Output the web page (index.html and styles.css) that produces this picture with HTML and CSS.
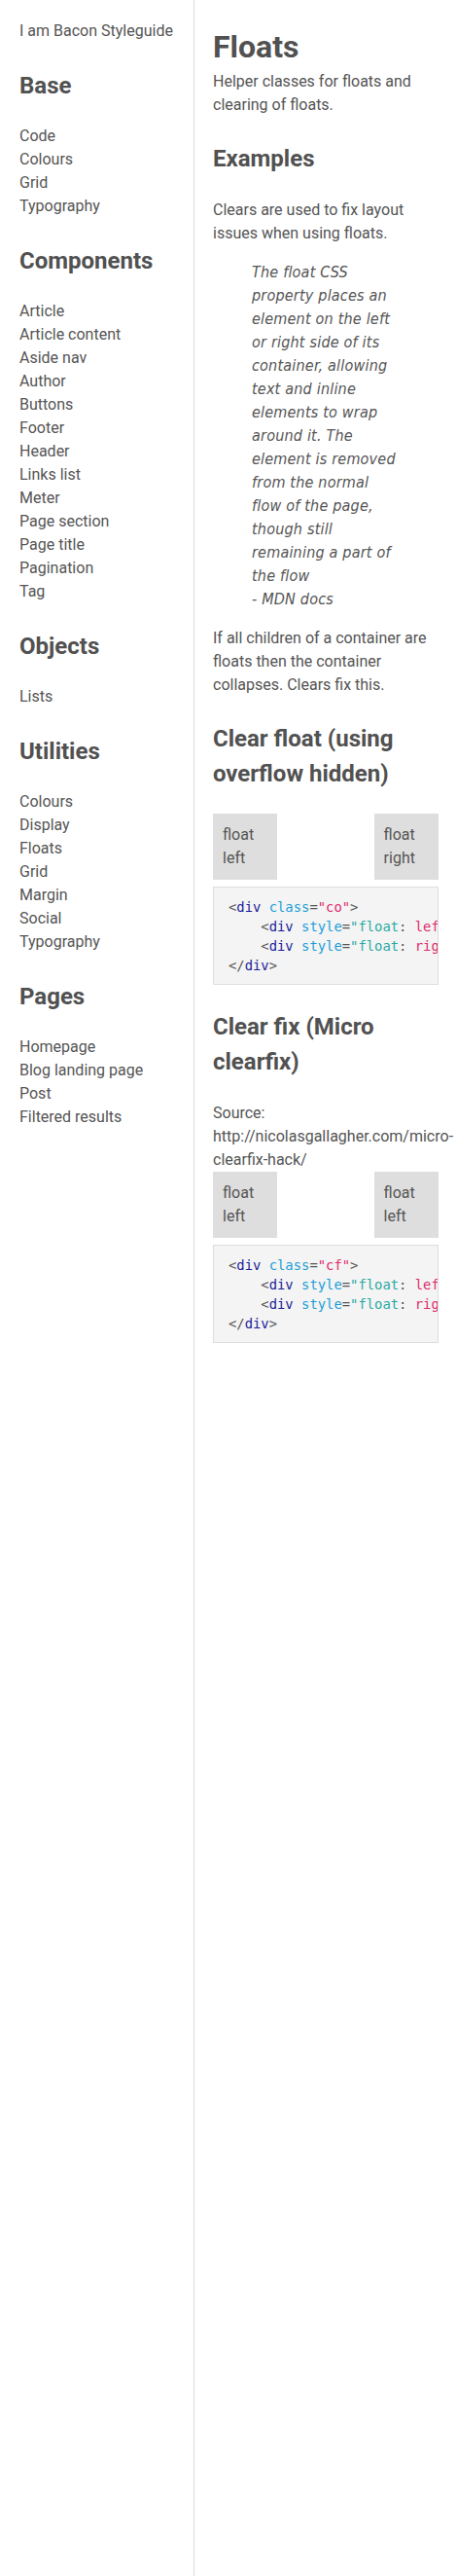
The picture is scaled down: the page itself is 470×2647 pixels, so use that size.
FILE: index.html
```html
<!DOCTYPE html>
<html lang="en">
<head>
<meta charset="utf-8">
<title>Floats - I am Bacon Styleguide</title>
<link rel="stylesheet" href="styles.css">
</head>
<body>
<div class="layout">
  <aside class="sidebar">
    <p class="brand">I am Bacon Styleguide</p>

    <h2 class="nav-title">Base</h2>
    <ul class="nav-list">
      <li>Code</li>
      <li>Colours</li>
      <li>Grid</li>
      <li>Typography</li>
    </ul>

    <h2 class="nav-title">Components</h2>
    <ul class="nav-list">
      <li>Article</li>
      <li>Article content</li>
      <li>Aside nav</li>
      <li>Author</li>
      <li>Buttons</li>
      <li>Footer</li>
      <li>Header</li>
      <li>Links list</li>
      <li>Meter</li>
      <li>Page section</li>
      <li>Page title</li>
      <li>Pagination</li>
      <li>Tag</li>
    </ul>

    <h2 class="nav-title">Objects</h2>
    <ul class="nav-list">
      <li>Lists</li>
    </ul>

    <h2 class="nav-title">Utilities</h2>
    <ul class="nav-list">
      <li>Colours</li>
      <li>Display</li>
      <li>Floats</li>
      <li>Grid</li>
      <li>Margin</li>
      <li>Social</li>
      <li>Typography</li>
    </ul>

    <h2 class="nav-title">Pages</h2>
    <ul class="nav-list">
      <li>Homepage</li>
      <li>Blog landing page</li>
      <li>Post</li>
      <li>Filtered results</li>
    </ul>
  </aside>

  <main class="main">
    <h1 class="page-title">Floats</h1>
    <p class="text">Helper classes for floats and clearing of floats.</p>

    <h2 class="section-title">Examples</h2>
    <p class="text">Clears are used to fix layout issues when using floats.</p>
    <blockquote class="quote">
      <p class="quote-text">The float CSS property places an element on the left or right side of its container, allowing text and inline elements to wrap around it. The element is removed from the normal flow of the page, though still remaining a part of the flow</p>
      <p class="quote-source">- MDN docs</p>
    </blockquote>
    <p class="text">If all children of a container are floats then the container collapses. Clears fix this.</p>

    <h2 class="section-title">Clear float (using overflow hidden)</h2>
    <div class="demo">
      <div class="demo-box">float left</div>
      <div class="demo-box demo-box--right">float right</div>
    </div>
    <pre class="code"><span class="c-p">&lt;</span><span class="c-t">div</span> <span class="c-a">class</span><span class="c-p">=</span><span class="c-s">"co"</span><span class="c-p">&gt;</span>
    <span class="c-p">&lt;</span><span class="c-t">div</span> <span class="c-a">style</span><span class="c-p">=</span><span class="c-v">"float</span><span class="c-p">:</span> <span class="c-s">left</span><span class="c-p">;</span><span class="c-v">"</span><span class="c-p">&gt;</span>float left<span class="c-p">&lt;/</span><span class="c-t">div</span><span class="c-p">&gt;</span>
    <span class="c-p">&lt;</span><span class="c-t">div</span> <span class="c-a">style</span><span class="c-p">=</span><span class="c-v">"float</span><span class="c-p">:</span> <span class="c-s">right</span><span class="c-p">;</span><span class="c-v">"</span><span class="c-p">&gt;</span>float right<span class="c-p">&lt;/</span><span class="c-t">div</span><span class="c-p">&gt;</span>
<span class="c-p">&lt;/</span><span class="c-t">div</span><span class="c-p">&gt;</span></pre>

    <h2 class="section-title">Clear fix (Micro clearfix)</h2>
    <p class="text">Source: http://nicolasgallagher.com/micro-clearfix-hack/</p>
    <div class="demo">
      <div class="demo-box">float left</div>
      <div class="demo-box demo-box--right">float left</div>
    </div>
    <pre class="code"><span class="c-p">&lt;</span><span class="c-t">div</span> <span class="c-a">class</span><span class="c-p">=</span><span class="c-s">"cf"</span><span class="c-p">&gt;</span>
    <span class="c-p">&lt;</span><span class="c-t">div</span> <span class="c-a">style</span><span class="c-p">=</span><span class="c-v">"float</span><span class="c-p">:</span> <span class="c-s">left</span><span class="c-p">;</span><span class="c-v">"</span><span class="c-p">&gt;</span>float left<span class="c-p">&lt;/</span><span class="c-t">div</span><span class="c-p">&gt;</span>
    <span class="c-p">&lt;</span><span class="c-t">div</span> <span class="c-a">style</span><span class="c-p">=</span><span class="c-v">"float</span><span class="c-p">:</span> <span class="c-s">right</span><span class="c-p">;</span><span class="c-v">"</span><span class="c-p">&gt;</span>float right<span class="c-p">&lt;/</span><span class="c-t">div</span><span class="c-p">&gt;</span>
<span class="c-p">&lt;/</span><span class="c-t">div</span><span class="c-p">&gt;</span></pre>
  </main>
</div>
</body>
</html>
```
FILE: styles.css
```css
html, body {
  margin: 0;
  padding: 0;
  background: #fff;
}

body {
  font-family: Roboto, "Liberation Sans", sans-serif;
  font-size: 16px;
  line-height: 24px;
  color: #555;
}

.layout {
  display: flex;
  min-height: 100vh;
}

/* Sidebar */
.sidebar {
  flex: none;
  width: 200px;
  box-sizing: border-box;
  border-right: 1px solid #dcdce0;
  padding: 20px 20px 40px;
}

.brand {
  margin: 0;
}

.nav-title {
  margin: 26px 0 22px;
  font-size: 24px;
  line-height: 36px;
  font-weight: 700;
  color: #515151;
}

.nav-list {
  list-style: none;
  margin: 0;
  padding: 0;
}

/* Main */
.main {
  flex: 1;
  min-width: 0;
  padding: 24px 19px 40px;
  overflow: hidden;
}

.page-title {
  margin: 0;
  font-size: 32px;
  line-height: 48px;
  font-weight: 700;
  color: #515151;
}

.text {
  margin: 0;
}

.section-title {
  margin: 25px 0 23px;
  font-size: 24px;
  line-height: 36px;
  font-weight: 700;
  color: #515151;
}

.quote {
  margin: 16px 44px 16px 40px;
  font-family: "DejaVu Sans Condensed", "DejaVu Sans", sans-serif;
  font-style: italic;
  letter-spacing: 0.2px;
}

.quote-text,
.quote-source {
  margin: 0;
}

/* Float demo */
.demo {
  overflow: hidden;
}

.demo-box {
  float: left;
  width: 20%;
  padding: 10px;
  background: #dedede;
}

.demo-box--right {
  float: right;
}

/* Code */
.code {
  margin: 7px 0 2px;
  padding: 10px 15px 9px;
  background: #f4f4f4;
  border: 1px solid #dddddd;
  font-family: "DejaVu Sans Mono", "Liberation Mono", monospace;
  font-size: 13.85px;
  line-height: 20px;
  color: #555;
  white-space: pre;
  overflow: hidden;
}

.c-p { color: #555; }
.c-t { color: #1c1c9a; }
.c-a { color: #1b9fd8; }
.c-s { color: #df2a6e; }
.c-v { color: #2aa9a3; }
```
